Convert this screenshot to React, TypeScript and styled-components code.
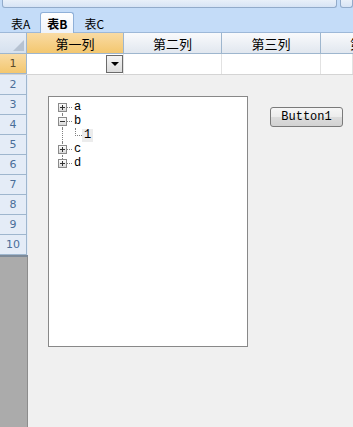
import styled, { createGlobalStyle } from "styled-components";

const GlobalStyle = createGlobalStyle`
  html, body {
    margin: 0;
    padding: 0;
    background: #f0f0f0;
    overflow: hidden;
  }
`;

const CJK = `"Noto Sans CJK SC", "Liberation Sans", sans-serif`;
const MONO = `"Liberation Mono", "Noto Sans CJK SC", monospace`;

const Page = styled.div`
  width: 353px;
  height: 427px;
  display: flex;
  flex-direction: column;
  background: #f0f0f0;
  font-family: ${CJK};
  font-size: 12px;
  color: #000;
  overflow: hidden;
`;

const TopBar = styled.div`
  height: 9px;
  display: flex;
  gap: 3px;
  padding-left: 2px;
  background: #c4dcf8;
  flex-shrink: 0;
`;

const TopPanel = styled.div<{ $w?: number }>`
  height: 7px;
  width: ${(p) => (p.$w ? `${p.$w}px` : "auto")};
  flex: ${(p) => (p.$w ? "none" : "1")};
  background: linear-gradient(#e9f0f9, #d7e4f5);
  border: 1px solid #92abca;
  border-top: none;
  border-radius: 0 0 3px 3px;
`;

const TabStrip = styled.div`
  height: 23px;
  display: flex;
  align-items: flex-end;
  padding-left: 3px;
  gap: 2px;
  background: #c4dcf8;
  border-bottom: 1px solid #9db8d8;
  flex-shrink: 0;
`;

const Tab = styled.div<{ $active?: boolean }>`
  height: 20px;
  padding: 0 ${(p) => (p.$active ? "6px" : "7px")};
  display: flex;
  align-items: center;
  font-family: ${CJK};
  font-size: 12px;
  font-weight: ${(p) => (p.$active ? 700 : 400)};
  margin-bottom: -1px;
  background: ${(p) => (p.$active ? "linear-gradient(#ffffff, #eef3fa)" : "transparent")};
  border: 1px solid ${(p) => (p.$active ? "#8fb0d8" : "transparent")};
  border-bottom: none;
  border-radius: 3px 3px 0 0;
`;

const HeaderRow = styled.div`
  height: 20px;
  display: flex;
  border-bottom: 1px solid #9eb6ce;
  flex-shrink: 0;
  overflow: hidden;
`;

const Corner = styled.div`
  width: 27px;
  box-sizing: border-box;
  border-right: 1px solid #9eb6ce;
  background: linear-gradient(#e8eef6, #d6e1ef);
  display: flex;
  align-items: flex-end;
  justify-content: flex-end;
  padding: 0 2px 2px 0;
  flex-shrink: 0;
`;

const CornerMark = styled.div`
  width: 0;
  height: 0;
  border-left: 11px solid transparent;
  border-bottom: 11px solid #b6c2d1;
`;

const ColHeader = styled.div<{ $w: number; $active?: boolean }>`
  width: ${(p) => p.$w}px;
  flex-shrink: 0;
  box-sizing: border-box;
  border-right: 1px solid #9eb6ce;
  display: flex;
  align-items: center;
  justify-content: center;
  white-space: nowrap;
  font-size: 13px;
  background: ${(p) =>
    p.$active
      ? "linear-gradient(#f9dba4, #f3c76f)"
      : "linear-gradient(#f9fafc, #e1e7ef)"};
`;

const DataRow = styled.div`
  height: 20px;
  display: flex;
  flex-shrink: 0;
  border-bottom: 1px solid #d4d4d4;
`;

const RowHead = styled.div<{ $active?: boolean }>`
  width: 27px;
  height: 20px;
  box-sizing: border-box;
  border-right: 1px solid #9eb6ce;
  border-bottom: 1px solid #9eb6ce;
  display: flex;
  align-items: center;
  justify-content: center;
  font-family: "DejaVu Sans", sans-serif;
  font-size: 11px;
  color: ${(p) => (p.$active ? "#5a4a2a" : "#4a6e99")};
  background: ${(p) =>
    p.$active ? "linear-gradient(#f9dba4, #f3c76f)" : "#e4ecf7"};
  flex-shrink: 0;
`;

const Cell = styled.div<{ $w?: number }>`
  width: ${(p) => (p.$w ? `${p.$w}px` : "auto")};
  flex: ${(p) => (p.$w ? "none" : "1")};
  box-sizing: border-box;
  border-right: 1px solid #e2e2e2;
  background: #fff;
  display: flex;
  justify-content: flex-end;
  align-items: center;
`;

const DropButton = styled.div`
  width: 17px;
  height: 18px;
  box-sizing: border-box;
  border: 1px solid #6b6b6b;
  background: linear-gradient(#f4f4f4, #dcdcdc);
  display: flex;
  align-items: center;
  justify-content: center;
  &::after {
    content: "";
    border-left: 4px solid transparent;
    border-right: 4px solid transparent;
    border-top: 4px solid #000;
  }
`;

const Body = styled.div`
  flex: 1;
  display: flex;
  min-height: 0;
`;

const RowColumn = styled.div`
  width: 28px;
  display: flex;
  flex-direction: column;
  background: #ababab;
  border-right: 1px solid #8c8c8c;
  box-sizing: border-box;
  flex-shrink: 0;
`;

const RowList = styled.div`
  display: flex;
  flex-direction: column;
  border-bottom: 2px solid #7d8a99;
  background: #e4ecf7;
  margin-right: -1px;
`;

const Canvas = styled.div`
  flex: 1;
  display: flex;
  align-items: flex-start;
  gap: 22px;
  padding: 21px 0 0 20px;
  background: #f0f0f0;
`;

const TreeBox = styled.div`
  width: 200px;
  height: 251px;
  box-sizing: border-box;
  border: 1px solid #888;
  background: #fff;
  padding: 3px 0 0 9px;
`;

const TreeRow = styled.div`
  height: 14px;
  display: flex;
  align-items: center;
  font-family: ${MONO};
  font-size: 12px;
`;

const Gutter = styled.div<{ $top?: boolean; $bottom?: boolean }>`
  width: 9px;
  height: 14px;
  position: relative;
  display: flex;
  align-items: center;
  flex-shrink: 0;
  &::before {
    content: "";
    position: absolute;
    left: 4px;
    top: ${(p) => (p.$top ? "0" : "7px")};
    bottom: ${(p) => (p.$bottom ? "0" : "7px")};
    border-left: 1px dotted #808080;
  }
`;

const Branch = styled.div<{ $w: number }>`
  width: ${(p) => p.$w}px;
  height: 0;
  border-top: 1px dotted #808080;
  flex-shrink: 0;
`;

const Elbow = styled.div`
  width: 6px;
  height: 7px;
  align-self: flex-start;
  margin-left: 8px;
  border-left: 1px dotted #808080;
  border-bottom: 1px dotted #808080;
  flex-shrink: 0;
`;

const Label = styled.span<{ $sel?: boolean }>`
  padding: 0 2px;
  line-height: 13px;
  background: ${(p) => (p.$sel ? "#ececec" : "transparent")};
`;

const PushButton = styled.div`
  margin-top: 11px;
  width: 73px;
  height: 20px;
  box-sizing: border-box;
  border: 1px solid #7a7a7a;
  border-radius: 3px;
  background: linear-gradient(#f6f6f6 0%, #ececec 50%, #dcdcdc 51%, #d2d2d2 100%);
  display: flex;
  align-items: center;
  justify-content: center;
  font-family: ${MONO};
  font-size: 12px;
`;

function Expander({ open }: { open?: boolean }) {
  return (
    <svg width="9" height="9" viewBox="0 0 9 9" style={{ position: "relative" }}>
      <defs>
        <linearGradient id="eg" x1="0" y1="0" x2="0" y2="1">
          <stop offset="0" stopColor="#ffffff" />
          <stop offset="1" stopColor="#d6d6d6" />
        </linearGradient>
      </defs>
      <rect x="0.5" y="0.5" width="8" height="8" fill="url(#eg)" stroke="#8a8a8a" />
      <line x1="2" y1="4.5" x2="7" y2="4.5" stroke="#333" />
      {!open && <line x1="4.5" y1="2" x2="4.5" y2="7" stroke="#333" />}
    </svg>
  );
}

const cols = [
  { w: 97, label: "第一列", active: true },
  { w: 98, label: "第二列" },
  { w: 99, label: "第三列" },
  { w: 98, label: "第四列" },
];

const rows = [2, 3, 4, 5, 6, 7, 8, 9, 10];

export default function App() {
  return (
    <Page>
      <GlobalStyle />
      <TopBar>
        <TopPanel $w={333} />
        <TopPanel />
      </TopBar>
      <TabStrip>
        <Tab>表A</Tab>
        <Tab $active>表B</Tab>
        <Tab>表C</Tab>
      </TabStrip>
      <HeaderRow>
        <Corner>
          <CornerMark />
        </Corner>
        {cols.map((c) => (
          <ColHeader key={c.label} $w={c.w} $active={c.active}>
            {c.label}
          </ColHeader>
        ))}
      </HeaderRow>
      <DataRow>
        <RowHead $active>1</RowHead>
        <Cell $w={97}>
          <DropButton />
        </Cell>
        <Cell $w={98} />
        <Cell $w={99} />
        <Cell />
      </DataRow>
      <Body>
        <RowColumn>
          <RowList>
            {rows.map((r) => (
              <RowHead key={r}>{r}</RowHead>
            ))}
          </RowList>
        </RowColumn>
        <Canvas>
          <TreeBox>
            <TreeRow>
              <Gutter $bottom>
                <Expander />
              </Gutter>
              <Branch $w={5} />
              <Label>a</Label>
            </TreeRow>
            <TreeRow>
              <Gutter $top $bottom>
                <Expander open />
              </Gutter>
              <Branch $w={5} />
              <Label>b</Label>
            </TreeRow>
            <TreeRow>
              <Gutter $top $bottom />
              <Elbow />
              <Label $sel>1</Label>
            </TreeRow>
            <TreeRow>
              <Gutter $top $bottom>
                <Expander />
              </Gutter>
              <Branch $w={5} />
              <Label>c</Label>
            </TreeRow>
            <TreeRow>
              <Gutter $top>
                <Expander />
              </Gutter>
              <Branch $w={5} />
              <Label>d</Label>
            </TreeRow>
          </TreeBox>
          <PushButton>Button1</PushButton>
        </Canvas>
      </Body>
    </Page>
  );
}
